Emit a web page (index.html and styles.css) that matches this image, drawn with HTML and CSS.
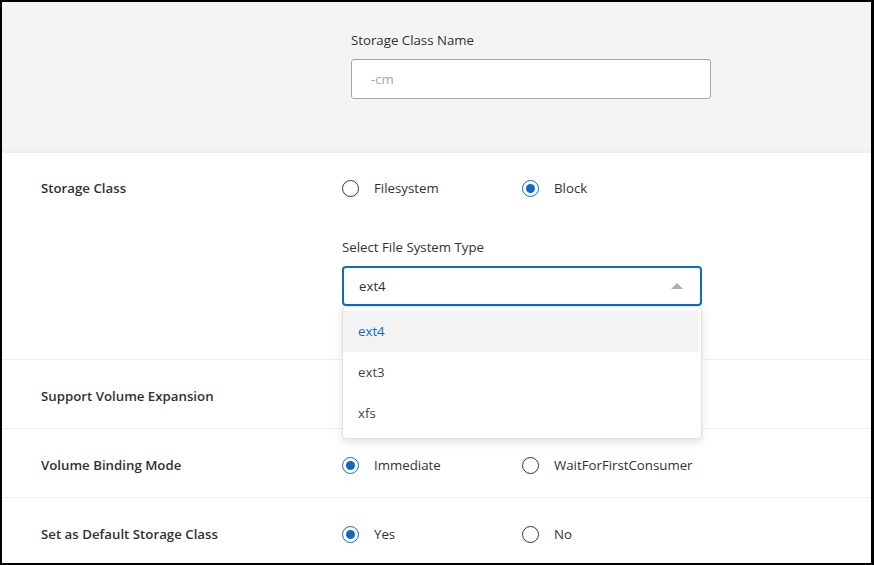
FILE: index.html
```html
<!DOCTYPE html>
<html lang="en">
<head>
<meta charset="utf-8">
<title>Storage Class</title>
<link rel="stylesheet" href="styles.css">
</head>
<body>
<div class="frame">
  <header class="header">
    <div class="field">
      <label class="field-label">Storage Class Name</label>
      <div class="text-input"><span class="placeholder">-cm</span></div>
    </div>
  </header>

  <section class="row row-first">
    <div class="row-label">Storage Class</div>
    <div class="row-controls">
      <div class="radio-group">
        <div class="radio"><span class="radio-circle"></span><span class="radio-text">Filesystem</span></div>
        <div class="radio checked"><span class="radio-circle"></span><span class="radio-text">Block</span></div>
      </div>
      <div class="fs-field">
        <div class="field-label">Select File System Type</div>
        <div class="select-wrap">
          <div class="select">
            <span class="select-value">ext4</span>
            <span class="select-arrow"></span>
          </div>
          <ul class="dropdown">
            <li class="option selected">ext4</li>
            <li class="option">ext3</li>
            <li class="option">xfs</li>
          </ul>
        </div>
      </div>
    </div>
  </section>

  <section class="row">
    <div class="row-label">Support Volume Expansion</div>
    <div class="row-controls"></div>
  </section>

  <section class="row">
    <div class="row-label">Volume Binding Mode</div>
    <div class="row-controls">
      <div class="radio-group">
        <div class="radio checked"><span class="radio-circle"></span><span class="radio-text">Immediate</span></div>
        <div class="radio"><span class="radio-circle"></span><span class="radio-text">WaitForFirstConsumer</span></div>
      </div>
    </div>
  </section>

  <section class="row row-last">
    <div class="row-label">Set as Default Storage Class</div>
    <div class="row-controls">
      <div class="radio-group">
        <div class="radio checked"><span class="radio-circle"></span><span class="radio-text">Yes</span></div>
        <div class="radio"><span class="radio-circle"></span><span class="radio-text">No</span></div>
      </div>
    </div>
  </section>
</div>
</body>
</html>
```

FILE: styles.css
```css
* { box-sizing: border-box; }

html, body {
  margin: 0;
  padding: 0;
  background: #000;
}

body {
  font-family: "Open Sans", "Noto Sans", sans-serif;
  font-size: 13.25px;
  color: #323130;
}

.frame {
  width: 874px;
  height: 565px;
  border: 2px solid #000;
  border-right-width: 3px;
  background: #fff;
  overflow: hidden;
  display: flex;
  flex-direction: column;
}

.header {
  height: 151px;
  flex: none;
  background: #f4f4f4;
  padding: 28px 0 0 349px;
  box-shadow: inset 0 -7px 6px -6px rgba(0, 0, 0, 0.05);
}

.field {
  display: flex;
  flex-direction: column;
  gap: 9px;
  width: 360px;
}

.field-label {
  line-height: 20px;
  color: #323130;
}

.text-input {
  height: 40px;
  background: #fff;
  border: 1px solid #a6a6a6;
  border-radius: 3px;
  padding: 0 19px;
  display: flex;
  align-items: center;
}

.placeholder {
  color: #a8a8a8;
}

.row {
  display: grid;
  grid-template-columns: 301px 1fr;
  padding: 26px 0 22px 39px;
  border-bottom: 1px solid #efefef;
  flex: none;
}

.row-first {
  padding-top: 25px;
  padding-bottom: 53px;
}

.row-last {
  border-bottom: none;
}

.row-label {
  font-weight: 600;
  line-height: 20px;
  color: #323130;
}

.row-controls {
  display: flex;
  flex-direction: column;
  min-height: 20px;
}

.radio-group {
  display: flex;
}

.radio {
  width: 180px;
  display: flex;
  align-items: center;
  gap: 15px;
  line-height: 20px;
}

.radio-circle {
  width: 17px;
  height: 17px;
  border: 1px solid #333;
  border-radius: 50%;
  flex: none;
  position: relative;
}

.radio.checked .radio-circle {
  border-color: #0f6cbd;
}

.radio.checked .radio-circle::after {
  content: "";
  position: absolute;
  left: 3px;
  top: 3px;
  width: 9px;
  height: 9px;
  border-radius: 50%;
  background: #0f6cbd;
}

.radio-text {
  color: #323130;
}

.fs-field {
  margin-top: 39px;
  display: flex;
  flex-direction: column;
  gap: 9px;
  width: 360px;
}

.select-wrap {
  position: relative;
}

.select {
  height: 40px;
  border: 2px solid #0f6cbd;
  border-radius: 4px;
  padding: 0 17px 0 15px;
  display: flex;
  align-items: center;
  justify-content: space-between;
  background: #fff;
}

.select-value {
  color: #323130;
}

.select-arrow {
  width: 0;
  height: 0;
  border-left: 6px solid transparent;
  border-right: 6px solid transparent;
  border-bottom: 6px solid #b0b0b0;
}

.dropdown {
  position: absolute;
  left: 0;
  top: 40px;
  width: 360px;
  margin: 0;
  padding: 4px 3px 4px 0;
  list-style: none;
  background: #fff;
  border: 1px solid #e1e1e1;
  border-radius: 4px;
  box-shadow: 0 3px 8px rgba(0, 0, 0, 0.12);
  z-index: 5;
}

.option {
  height: 41px;
  line-height: 41px;
  padding-left: 15px;
  color: #444;
}

.option.selected {
  background: #f3f3f3;
  color: #0f6cbd;
}
```
